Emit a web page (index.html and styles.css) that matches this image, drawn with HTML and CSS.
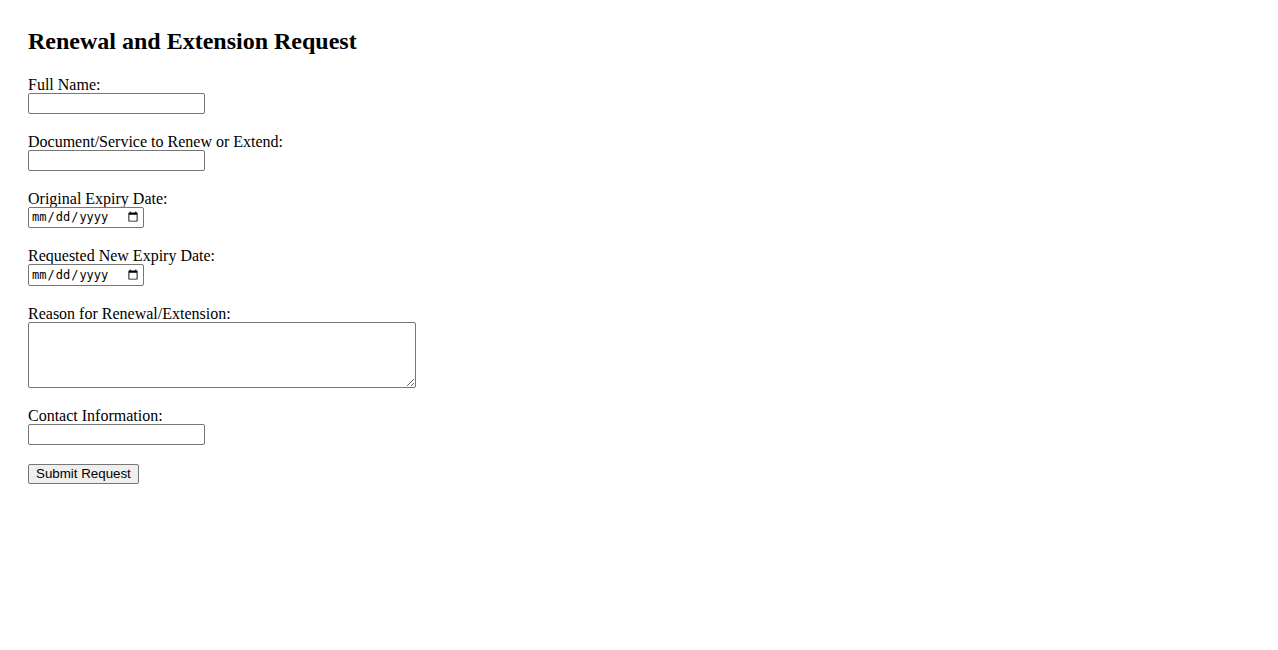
FILE: index.html
```html
<!DOCTYPE html>
<html lang="en">
<head>
<meta charset="utf-8">
<title>Renewal and Extension Request</title>
<link rel="stylesheet" href="styles.css">
</head>
<body>
<h2 class="title">Renewal and Extension Request</h2>
<form class="form">
  <div class="field">
    <label class="label" for="name">Full Name:</label>
    <input class="text-input" type="text" id="name">
  </div>
  <div class="field">
    <label class="label" for="doc">Document/Service to Renew or Extend:</label>
    <input class="text-input" type="text" id="doc">
  </div>
  <div class="field">
    <label class="label" for="orig">Original Expiry Date:</label>
    <input class="date-input" type="date" id="orig">
  </div>
  <div class="field">
    <label class="label" for="newdate">Requested New Expiry Date:</label>
    <input class="date-input" type="date" id="newdate">
  </div>
  <div class="field">
    <label class="label" for="reason">Reason for Renewal/Extension:</label>
    <textarea class="textarea" id="reason"></textarea>
  </div>
  <div class="field">
    <label class="label" for="contact">Contact Information:</label>
    <input class="text-input" type="text" id="contact">
  </div>
  <div class="field submit-field">
    <button class="submit" type="submit">Submit Request</button>
  </div>
</form>
</body>
</html>
```
FILE: styles.css
```css
html, body {
  background: #ffffff;
}
body {
  margin: 0;
  padding: 28px;
  font-family: "Liberation Serif", "Times New Roman", serif;
  font-size: 16px;
  color: #000000;
}
.title {
  margin: 0 0 19.6px 0;
  font-size: 24px;
  font-weight: bold;
  line-height: normal;
}
.form {
  display: flex;
  flex-direction: column;
  align-items: flex-start;
  gap: 18px;
}
.field {
  display: flex;
  flex-direction: column;
  align-items: flex-start;
}
.submit-field {
  margin-top: 1px;
}
.label {
  display: block;
  height: 18px;
  padding-top: 1px;
  box-sizing: border-box;
  line-height: 17px;
}
.text-input,
.date-input,
.textarea {
  box-sizing: border-box;
  margin: 0;
  border: 1px solid #767676;
  border-radius: 2px;
  background: #ffffff;
}
.text-input {
  width: 177px;
  height: 21px;
  padding: 1px 2px;
  font-family: "Liberation Sans", Arial, sans-serif;
  font-size: 13.33px;
}
.date-input {
  width: 116px;
  height: 21.5px;
  padding: 1px 2px;
  font-family: "DejaVu Sans Mono", "Liberation Mono", monospace;
  font-size: 12px;
  color: #000000;
}
.textarea {
  display: block;
  width: 388px;
  height: 66px;
  padding: 2px;
  font-family: "Liberation Mono", monospace;
  font-size: 13.33px;
  resize: both;
}
.submit {
  box-sizing: border-box;
  margin: 0;
  height: 20px;
  padding: 1px 7px;
  border: 1px solid #767676;
  border-radius: 2px;
  background: #efefef;
  font-family: "Liberation Sans", Arial, sans-serif;
  font-size: 13.33px;
  color: #000000;
  line-height: normal;
}
```
